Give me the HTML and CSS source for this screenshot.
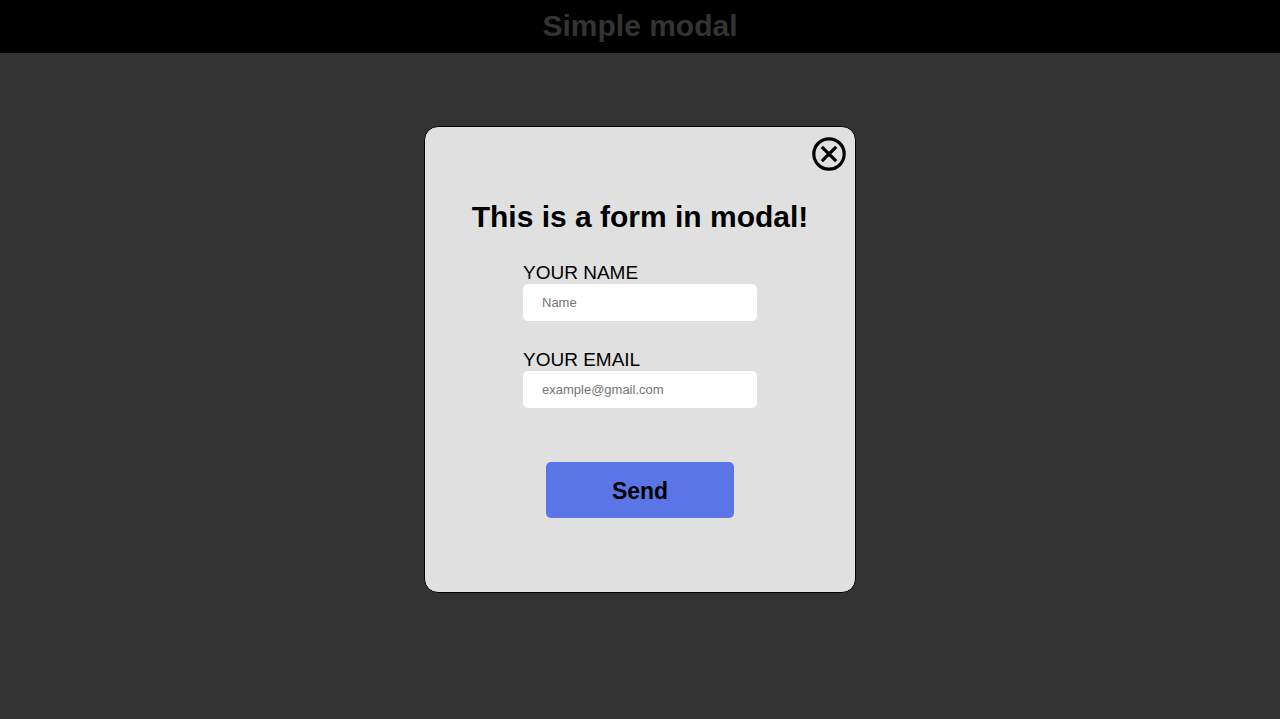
FILE: index.html
```html
<!DOCTYPE html>
<html lang="en">
<head>
  <meta charset="utf-8">
  <meta name="viewport" content="width=device-width, initial-scale=1">
  <title>Simple modal</title>
  <link rel="stylesheet" href="styles.css">
</head>
<body class="page">
  <header class="header">
    <h1 class="header-title">Simple modal</h1>
  </header>
  <main class="overlay">
    <section class="modal" role="dialog" aria-modal="true" aria-labelledby="modal-title">
      <button class="close" type="button" aria-label="Close">
        <svg class="close-icon" viewBox="0 0 34 34" fill="none" stroke="#000" stroke-width="3.2" aria-hidden="true">
          <circle cx="17" cy="17" r="15.2"/>
          <path d="M9.8 9.8 24.2 24.2M24.2 9.8 9.8 24.2"/>
        </svg>
      </button>
      <h2 class="modal-title" id="modal-title">This is a form in modal!</h2>
      <form class="form">
        <div class="field">
          <label class="label" for="name">YOUR NAME</label>
          <input class="input" id="name" type="text" placeholder="Name">
        </div>
        <div class="field">
          <label class="label" for="email">YOUR EMAIL</label>
          <input class="input" id="email" type="email" placeholder="example@gmail.com">
        </div>
        <button class="send" type="submit">Send</button>
      </form>
    </section>
  </main>
</body>
</html>
```

FILE: styles.css
```css
* {
  box-sizing: border-box;
}

.page {
  margin: 0;
  min-height: 100vh;
  background: #333;
  font-family: "Liberation Sans", Arial, sans-serif;
}

.header {
  padding: 8px 16px 10px;
  background: #000;
  text-align: center;
}

.header-title {
  margin: 0;
  color: #333;
  font-size: 30px;
  line-height: 35px;
}

/* Covers the whole window and centres the dialog in it */
.overlay {
  position: fixed;
  inset: 0;
  display: flex;
  align-items: center;
  justify-content: center;
}

.modal {
  position: relative;
  width: 432px;
  max-width: 100%;
  padding: 72px 24px 74px;
  border: 1px solid #000;
  border-radius: 14px;
  background: #e0e0e0;
}

.close {
  position: absolute;
  top: 10px;
  right: 9px;
  padding: 0;
  border: 0;
  background: none;
  cursor: pointer;
}

.close-icon {
  display: block;
  width: 34px;
  height: 34px;
}

.modal-title {
  margin: 0 0 27px;
  font-size: 30px;
  line-height: 36px;
  text-align: center;
}

.form {
  display: flex;
  flex-direction: column;
  align-items: center;
}

.field {
  display: flex;
  flex-direction: column;
  width: 234px;
  margin-bottom: 28px;
}

.label {
  font-size: 19px;
  line-height: 22px;
}

.input {
  width: 100%;
  height: 37px;
  padding: 0 19px;
  border: 0;
  border-radius: 5px;
  background: #fff;
  font-family: inherit;
  font-size: 13px;
}

.input::placeholder {
  color: #757575;
}

.send {
  width: 188px;
  height: 56px;
  margin-top: 26px;
  padding: 2px 0 0;
  border: 0;
  border-radius: 5px;
  background: #5b75e6;
  color: #000;
  font-family: inherit;
  font-size: 23px;
  font-weight: bold;
  cursor: pointer;
}
```
